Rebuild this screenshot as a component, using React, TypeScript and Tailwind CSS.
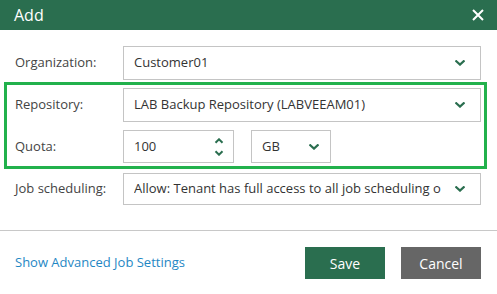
import React from "react";

const Chevron = ({ className = "" }: { className?: string }) => (
  <svg width="10" height="6" viewBox="0 0 10 6" className={className}>
    <polyline points="1.3,1.2 5,4.6 8.7,1.2" fill="none" stroke="#2a6e4f" strokeWidth="2.2" strokeLinecap="square" />
  </svg>
);

const Select = ({ text, w = "w-[358px]", h = "h-[34px]" }: { text: string; w?: string; h?: string }) => (
  <div className={`${w} ${h} border border-[#c4c4c4] bg-white flex items-center pl-[10px] pr-[15px]`}>
    <div className="flex-1 min-w-0 mr-[8px] overflow-hidden">
      <div className="whitespace-nowrap text-[#333]">{text}</div>
    </div>
    <Chevron />
  </div>
);

export default function App() {
  return (
    <div className="w-[497px] h-[294px] bg-white overflow-hidden text-[13px]" style={{ fontFamily: '"Open Sans", "Segoe UI", sans-serif' }}>
      <div className="h-[30px] bg-[#2a6e4f] flex items-center justify-between pl-[14px] pr-[13px]">
        <span className="text-white text-[16px]">Add</span>
        <svg width="12" height="12" viewBox="0 0 12 12">
          <path d="M1 1 L11 11 M11 1 L1 11" stroke="white" strokeWidth="2" />
        </svg>
      </div>
      <div className="px-[4px] pt-[16px]">
        <div className="flex items-center pl-[11px]">
          <div className="w-[108px] text-[#444]">Organization:</div>
          <Select text="Customer01" />
        </div>
        <div className="mt-[2px] w-[483px] border-[3px] border-[#22b14c] pl-[8px] pr-[3px] pt-[3px] pb-[3px] flex flex-col gap-[8px]">
          <div className="flex items-center">
            <div className="w-[108px] text-[#444]">Repository:</div>
            <Select text="LAB Backup Repository (LABVEEAM01)" />
          </div>
          <div className="flex items-center">
            <div className="w-[108px] text-[#444]">Quota:</div>
            <div className="w-[111px] h-[33px] border border-[#c4c4c4] flex items-center pl-[10px] pr-[9px]">
              <div className="flex-1 text-[#333]">100</div>
              <div className="flex flex-col items-center gap-[6px]">
                <svg width="10" height="6" viewBox="0 0 10 6">
                  <polyline points="1.5,4.8 5,1.3 8.5,4.8" fill="none" stroke="#2a6e4f" strokeWidth="2" />
                </svg>
                <svg width="10" height="6" viewBox="0 0 10 6">
                  <polyline points="1.5,1.2 5,4.7 8.5,1.2" fill="none" stroke="#2a6e4f" strokeWidth="2" />
                </svg>
              </div>
            </div>
            <div className="ml-[17px] w-[80px] h-[33px] border border-[#c4c4c4] flex items-center pl-[10px] pr-[11px]">
              <div className="flex-1 text-[#333]">GB</div>
              <Chevron />
            </div>
          </div>
        </div>
        <div className="mt-[4px] flex items-center pl-[11px]">
          <div className="w-[108px] text-[#444]">Job scheduling:</div>
          <Select text="Allow: Tenant has full access to all job scheduling o" h="h-[32px]" />
        </div>
      </div>
      <div className="mt-[25px] h-px bg-[#c8c8c8]" />
      <div className="mt-[16px] flex items-center pl-[15px] pr-[16px]">
        <span className="flex-1 text-[#1f87c4]">Show Advanced Job Settings</span>
        <button className="w-[80px] h-[32px] bg-[#2a6e4f] text-white text-[14px]">Save</button>
        <button className="ml-[16px] w-[80px] h-[32px] bg-[#666666] text-white text-[14px]">Cancel</button>
      </div>
    </div>
  );
}
